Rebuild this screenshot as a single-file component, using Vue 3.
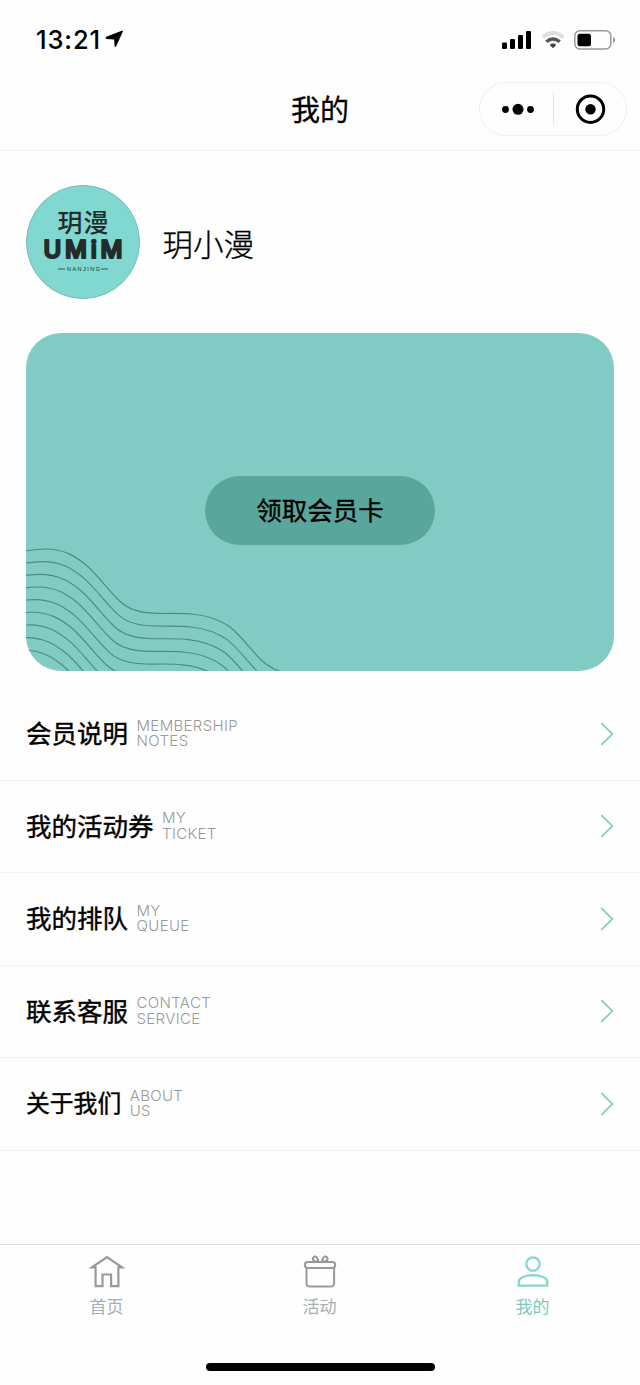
<script setup>
const rows = [
  { zh: '会员说明', en: ['MEMBERSHIP', 'NOTES'] },
  { zh: '我的活动券', en: ['MY', 'TICKET'] },
  { zh: '我的排队', en: ['MY', 'QUEUE'] },
  { zh: '联系客服', en: ['CONTACT', 'SERVICE'] },
  { zh: '关于我们', en: ['ABOUT', 'US'], compact: true },
]
const waves = Array.from({ length: 9 }, (_, i) => `translate(${-2.8 * i} ${12.65 * i})`)
</script>

<template>
  <div class="page">
    <header class="status">
      <div class="clock">
        <span>13:21</span>
        <svg class="arrow" width="19" height="18" viewBox="0 0 19 18"><path d="M1.200 6.800 16.800.7q1.400-.4 1 1L11.200 16.200q-1.100 1.500-1.600-.2L9.100 9.600 1.600 9.100q-1.900-.6-.4-2.300z" /></svg>
      </div>
      <div class="signals">
        <svg width="30" height="18" viewBox="0 0 30 18">
          <rect x="0" y="11.500" width="5" height="6.500" rx="1.300" /><rect x="8" y="8" width="5" height="10" rx="1.300" />
          <rect x="16" y="4" width="5" height="14" rx="1.300" /><rect x="24" y="0" width="5" height="18" rx="1.300" />
        </svg>
        <svg class="wifi" width="24" height="18" viewBox="0 0 24 18" fill="none">
          <path d="M1.800 6.300Q12-2.500 22.200 6.300" stroke="#dedede" stroke-width="3.800" />
          <path d="M5.300 10.700Q12 5.100 18.700 10.700" stroke="#555" stroke-width="3.400" />
          <path d="M8.700 13.900Q12 11.300 15.300 13.900L12 17.200z" fill="#444" />
        </svg>
        <svg class="battery" width="42" height="20" viewBox="0 0 42 20">
          <rect x=".8" y=".8" width="36" height="18.200" rx="5" fill="none" stroke="#999" stroke-width="1.500" />
          <rect x="3.500" y="3.700" width="13.500" height="12.500" rx="2.500" /><path d="M39 6.800q2.200 1.200 2.200 3.200T39 13.200z" fill="#999" />
        </svg>
      </div>
    </header>

    <nav class="nav">
      <h1>我的</h1>
      <div class="capsule">
        <svg width="148" height="54" viewBox="0 0 148 54">
          <circle cx="26.500" cy="27.500" r="3.400" /><circle cx="39" cy="27.300" r="5.500" /><circle cx="51.500" cy="27.500" r="3.400" />
          <path d="M74.500 11v32" stroke="#e2e2e2" />
          <circle cx="111.500" cy="27.200" r="13.200" fill="none" stroke="#000" stroke-width="3" /><circle cx="111.500" cy="27.200" r="5.200" />
        </svg>
      </div>
    </nav>

    <section class="profile">
      <svg class="avatar" width="114" height="114" viewBox="0 0 114 114">
        <circle cx="57" cy="57" r="56.500" fill="#80d8d0" stroke="#78bdb8" />
        <g fill="#222c2b" text-anchor="middle">
          <text class="logo-zh" x="57" y="47" textLength="51">玥漫</text>
          <text class="logo-en" x="57" y="72.500" textLength="79" lengthAdjust="spacing">UMiM</text>
          <text class="logo-city" x="57.500" y="86" textLength="33">NANJING</text>
        </g>
        <path d="M32 84h7M75 84h7" stroke="#31514e" stroke-width=".9" />
      </svg>
      <span class="name">玥小漫</span>
    </section>

    <section class="card">
      <svg class="waves" width="588" height="338" viewBox="0 0 588 338" fill="none" stroke="#4f8984" stroke-width="1.150">
        <path v-for="w in waves" :key="w" :transform="w" d="M-2 218.400C5 217 12 216 20 216C38 216 49 223 60 232C73 243 84 260 96 270C104 277 115 280.300 132 280.400C146 280.700 157 279.800 168 281.300C184 283 194 287 204 294C218 305 228 322 240 331Q247 336 254 338.500" />
      </svg>
      <button class="claim">领取会员卡</button>
    </section>

    <ul class="menu">
      <li v-for="r in rows" :key="r.zh" :class="{ compact: r.compact }">
        <span class="zh">{{ r.zh }}</span>
        <span class="en"><span v-for="word in r.en" :key="word">{{ word }}</span></span>
        <svg class="chevron" width="14" height="24" viewBox="0 0 14 24" fill="none" stroke="#7dcbc4" stroke-width="1.700"><path d="M1.300 1.200 12.300 12 1.300 22.800" /></svg>
      </li>
    </ul>

    <footer class="tabs">
      <div class="tab">
        <svg width="36" height="36" viewBox="0 0 36 36" fill="none" stroke="#999" stroke-width="2.200"><path d="M6.600 32.200V13.300H3L18 3l15 10.300h-3.600v18.900H22.100V20.500h-8.600v11.700z" /></svg>
        <span>首页</span>
      </div>
      <div class="tab">
        <svg width="36" height="36" viewBox="0 0 36 36" fill="none" stroke="#999" stroke-width="2"><rect x="2.800" y="8" width="30.400" height="6" rx="3" /><path d="M4.500 14v15q0 3.600 3.600 3.600h20.400q3.600 0 3.600-3.600V14M16.200 8C12 8 10 5.700 11.300 3.600 12.900 1 16.200 3 16.200 8zM20.200 8c4.200 0 6.200-2.300 4.900-4.400C23.500 1 20.200 3 20.200 8z" /></svg>
        <span>活动</span>
      </div>
      <div class="tab active">
        <svg width="36" height="36" viewBox="0 0 36 36" fill="none" stroke="#85d7cf" stroke-width="2.300"><circle cx="18" cy="10" r="6.700" /><path d="M3.800 31.700v-4C3.800 23.800 10 21.200 18 21.200s14.200 2.600 14.200 6.500v4z" /></svg>
        <span>我的</span>
      </div>
    </footer>
    <div class="home-bar"></div>
  </div>
</template>

<style>
body { margin: 0; background: #fefefe; }
</style>

<style scoped>
.page { width: 640px; height: 1385px; box-sizing: border-box; overflow: hidden; display: flex; flex-direction: column; background: #fefefe; color: #000; font-family: "Liberation Sans", "Noto Sans CJK SC", sans-serif; }
.status { height: 78px; flex: none; display: flex; justify-content: space-between; box-sizing: border-box; padding: 25px 24px 0 36px; }
.clock { display: flex; font: 500 25.5px/30px Inter, sans-serif; letter-spacing: .9px; }
.arrow { margin: 5px 0 0 4px; }
.signals { display: flex; padding-top: 6px; }
.wifi { margin-left: 9px; }
.battery { margin: -1px 0 0 9px; }
.nav { height: 73px; flex: none; box-sizing: border-box; border-bottom: 1px solid #f1f1f1; display: grid; grid-template-columns: 1fr auto 1fr; padding: 4px 13px 0; }
h1 { grid-column: 2; margin: 5px 0 0; font: 400 29px/42px "Noto Sans CJK SC", sans-serif; -webkit-text-stroke: .3px; }
.capsule { justify-self: end; width: 148px; height: 54px; border-radius: 28px; box-shadow: inset 0 0 0 1px #f0f0f0; }
.profile { height: 182px; flex: none; display: flex; align-items: flex-start; box-sizing: border-box; padding: 34px 26px 0; gap: 22.500px; }
.name { font: 300 30.500px/44px "Noto Sans CJK SC", sans-serif; margin-top: 36px; -webkit-text-stroke: .35px; }
.logo-zh { font: 500 25px "Noto Sans CJK SC", sans-serif; }
.logo-en { font: 500 24px Inter, sans-serif; stroke: #222c2b; stroke-width: 2.200px; stroke-linejoin: round; }
.logo-city { font: 5.500px "Liberation Sans", sans-serif; }
.card { width: 588px; height: 338px; flex: none; margin-left: 26px; border-radius: 35px; background: #82cbc4; overflow: hidden; position: relative; display: flex; align-items: center; justify-content: center; }
.waves { position: absolute; inset: 0; }
.claim { position: relative; width: 230px; height: 69px; margin-top: 17px; padding: 0 0 3px; border: 0; border-radius: 35px; background: #59a69c; color: #000; font: 400 25.500px/36px "Noto Sans CJK SC", sans-serif; -webkit-text-stroke: .35px; }
.menu { list-style: none; margin: 17px 0 0; padding: 0; }
.menu li { height: 92.500px; box-sizing: border-box; border-bottom: 1px solid #f3f3f3; display: flex; align-items: center; padding: 0 26.500px 0 26px; }
.zh { margin-top: -3px; font: 400 25.500px/36px "Noto Sans CJK SC", sans-serif; -webkit-text-stroke: .4px; }
.compact .zh { font-size: 23.800px; }
.en { display: flex; flex-direction: column; margin: -1px 0 0 8.500px; color: #999; font: 300 15px/15.400px Inter, sans-serif; letter-spacing: .35px; }
.chevron { margin-left: auto; }
.tabs { height: 100px; flex: none; margin-top: auto; box-sizing: border-box; border-top: 1px solid #dedede; display: grid; grid-template-columns: repeat(3, 1fr); padding: 9px 1px 0 0; }
.tab { display: flex; flex-direction: column; align-items: center; color: #a5afb4; font: 400 17px/24px "Noto Sans CJK SC", sans-serif; }
.tab span { margin-top: 4px; }
.active { color: #7fcac3; }
.home-bar { width: 229px; height: 8px; flex: none; border-radius: 4px; background: #000; margin: 19px auto 14px; }
</style>
